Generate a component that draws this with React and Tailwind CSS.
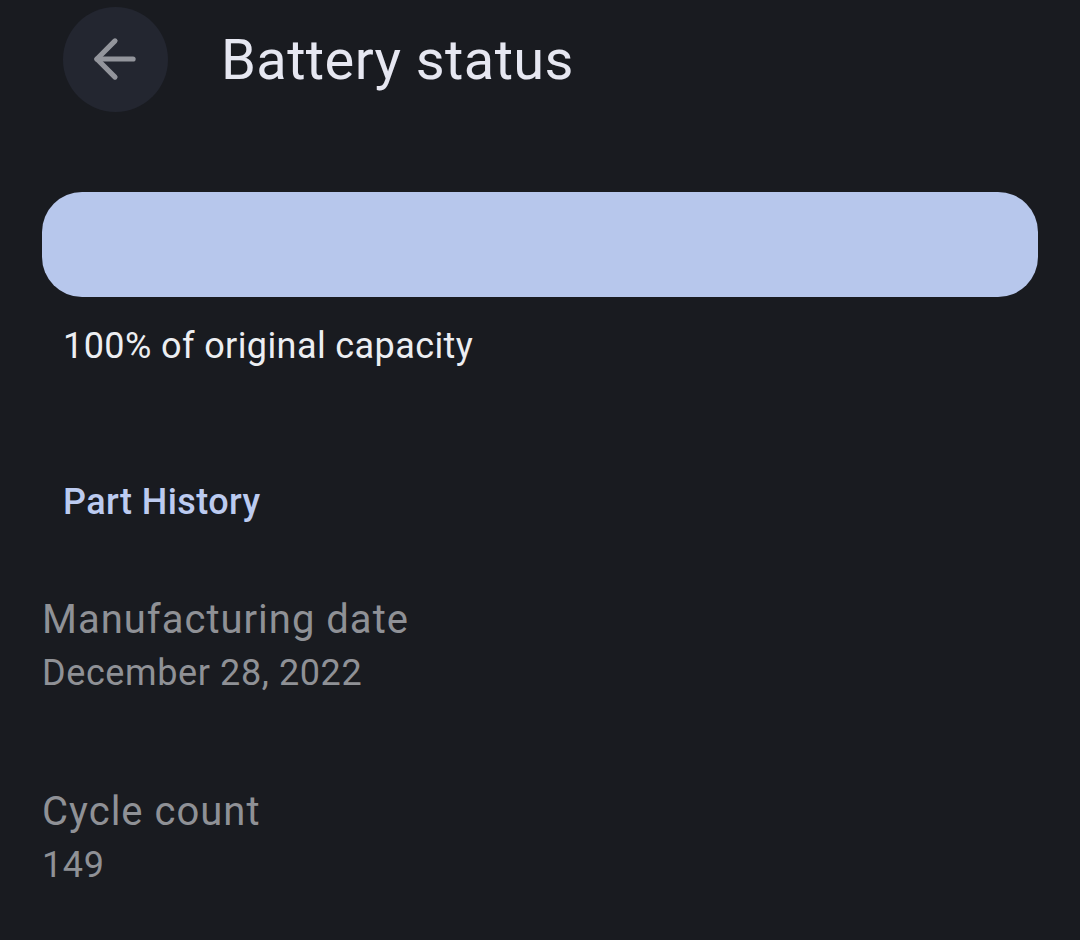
import { ArrowLeft } from 'lucide-react';

function InfoRow({ label, value }) {
  return (
    <div className="flex flex-col">
      <div className="text-[40px] leading-[46px] tracking-[1px] text-[#8f9196]">{label}</div>
      <div className="mt-[7px] text-[36px] leading-[46px] tracking-[0.6px] text-[#8f9196]">{value}</div>
    </div>
  );
}

export default function App() {
  return (
    <div className="h-[940px] w-[1080px] overflow-hidden bg-[#191b20] font-['Roboto',sans-serif]">
      {/* Header */}
      <div className="flex items-center pl-[63px] pt-[7px]">
        <button className="flex h-[105px] w-[105px] items-center justify-center rounded-full bg-[#232630]">
          <ArrowLeft className="mb-[1px] mr-[2px] h-[62px] w-[62px] text-[#93959c]" strokeWidth={2} />
        </button>
        <h1 className="ml-[53px] text-[56px] leading-[64px] tracking-[0.4px] text-[#e6e7f1]">Battery status</h1>
      </div>

      {/* Capacity bar */}
      <div className="mx-[42px] mt-[80px] h-[105px] rounded-[40px] bg-[#b7c7ec]" />
      <p className="ml-[63px] mt-[26px] text-[36px] leading-[46px] tracking-[0.4px] text-[#eceef2]">100% of original capacity</p>

      {/* Part history */}
      <h2 className="ml-[63px] mt-[110px] text-[36px] font-medium leading-[46px] tracking-[0.4px] text-[#bccbf0]">Part History</h2>

      <div className="ml-[42px] mt-[72px] flex flex-col gap-[93px]">
        <InfoRow label="Manufacturing date" value="December 28, 2022" />
        <InfoRow label="Cycle count" value="149" />
      </div>
    </div>
  );
}
